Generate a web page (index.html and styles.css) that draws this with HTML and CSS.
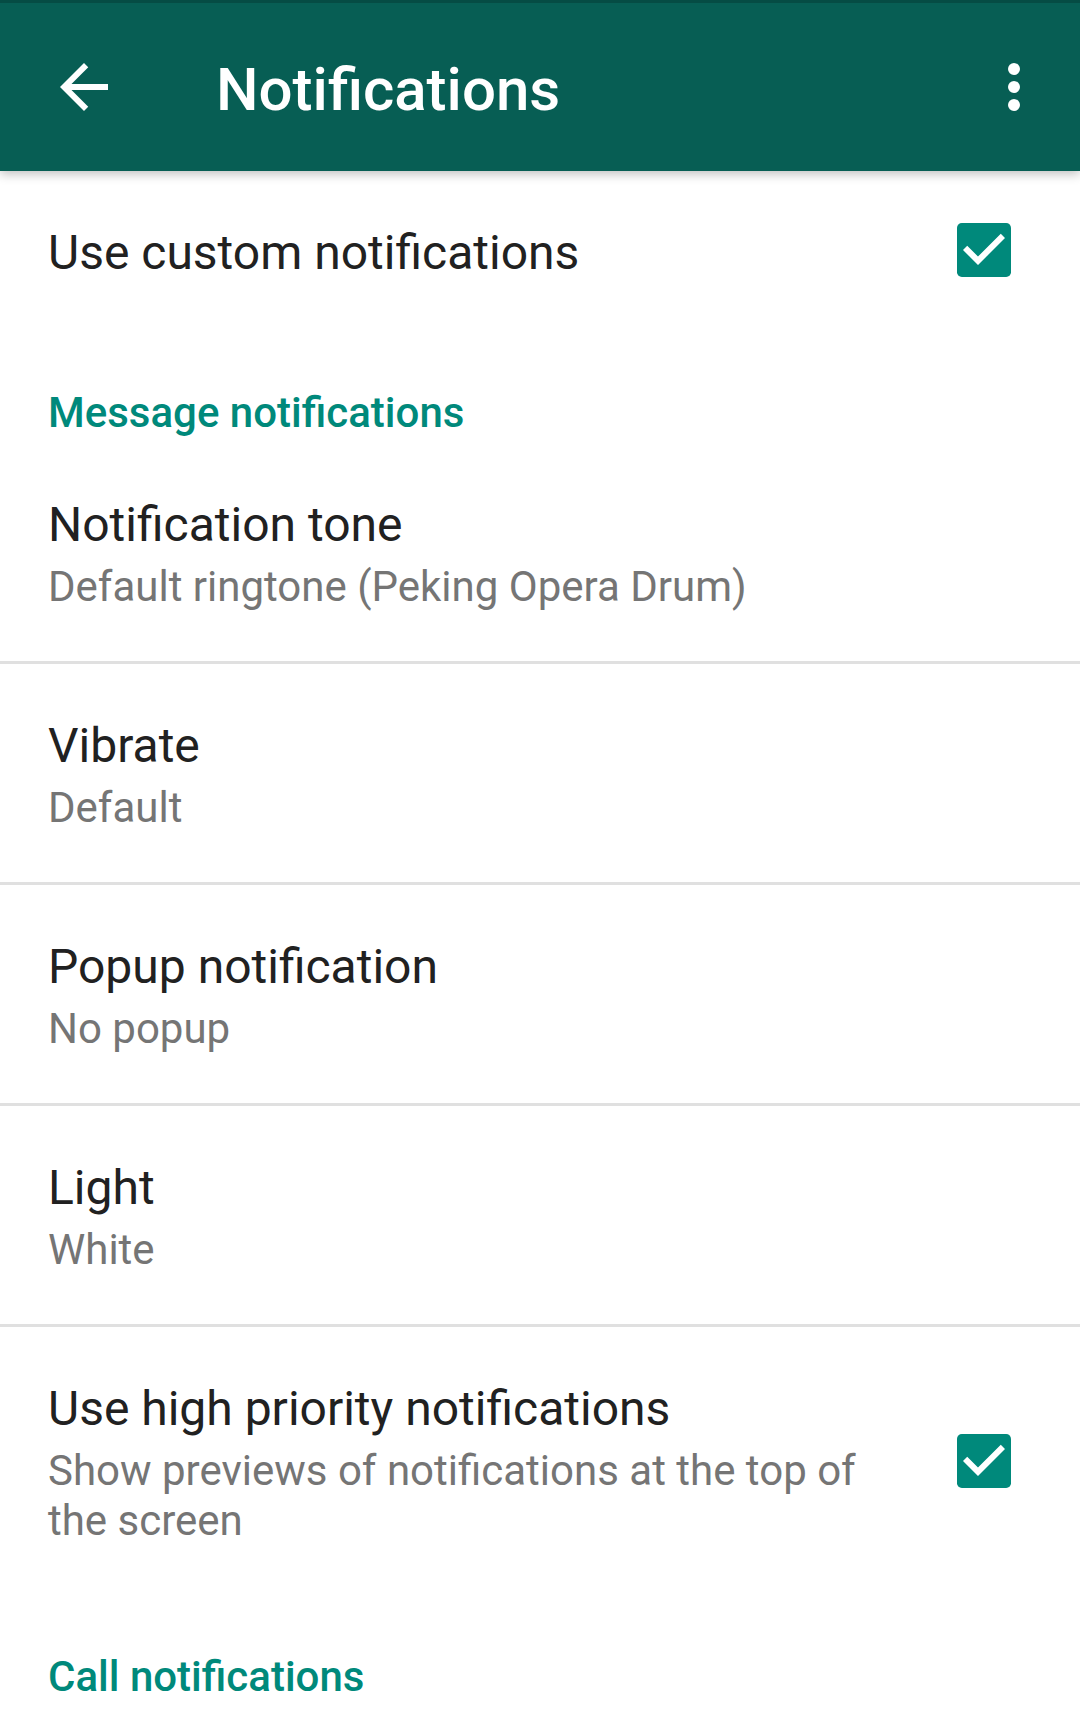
FILE: index.html
```html
<!DOCTYPE html>
<html lang="en">
<head>
    <meta charset="UTF-8">
    <meta name="viewport" content="width=device-width, initial-scale=1.0">
    <title>Notifications</title>
    <link rel="stylesheet" href="styles.css">
</head>
<body>
    <header class="toolbar">
        <svg class="toolbar-icon back" viewBox="0 0 24 24" aria-label="Back">
            <path d="M20 11H7.83l5.59-5.59L12 4l-8 8 8 8 1.41-1.41L7.83 13H20v-2z"/>
        </svg>
        <h1 class="toolbar-title">Notifications</h1>
        <svg class="toolbar-icon more" viewBox="0 0 24 24" aria-label="More options">
            <circle cx="12" cy="6" r="2"/>
            <circle cx="12" cy="12" r="2"/>
            <circle cx="12" cy="18" r="2"/>
        </svg>
    </header>

    <main class="prefs">
        <div class="pref pref-check first">
            <div class="pref-text">
                <div class="pref-title">Use custom notifications</div>
            </div>
            <svg class="checkbox" viewBox="3 3 18 18">
                <rect x="3" y="3" width="18" height="18" rx="1.6"/>
                <path class="tick" d="M10 17l-5-5 1.41-1.41L10 14.17l7.59-7.59L19 8l-9 9z"/>
            </svg>
        </div>

        <div class="category">Message notifications</div>

        <div class="pref divided">
            <div class="pref-title">Notification tone</div>
            <div class="pref-summary">Default ringtone (Peking Opera Drum)</div>
        </div>
        <div class="pref divided">
            <div class="pref-title">Vibrate</div>
            <div class="pref-summary">Default</div>
        </div>
        <div class="pref divided">
            <div class="pref-title">Popup notification</div>
            <div class="pref-summary">No popup</div>
        </div>
        <div class="pref divided">
            <div class="pref-title">Light</div>
            <div class="pref-summary">White</div>
        </div>

        <div class="pref pref-check">
            <div class="pref-text">
                <div class="pref-title">Use high priority notifications</div>
                <div class="pref-summary">Show previews of notifications at the top of the screen</div>
            </div>
            <svg class="checkbox" viewBox="3 3 18 18">
                <rect x="3" y="3" width="18" height="18" rx="1.6"/>
                <path class="tick" d="M10 17l-5-5 1.41-1.41L10 14.17l7.59-7.59L19 8l-9 9z"/>
            </svg>
        </div>

        <div class="category">Call notifications</div>
    </main>
</body>
</html>
```

FILE: styles.css
```css
/* Colors */
:root {
    --primary-color: #075e54;
    --primary-dark: #054c44;
    --accent-color: #00897b;
    --text-color: #212121;
    --summary-color: #757575;
    --divider-color: #e0e0e0;
}

body {
    font-family: Roboto, "Liberation Sans", sans-serif;
    margin: 0;
    padding: 0;
    background: #fff;
    color: var(--text-color);
    overflow: hidden;
}

/* Toolbar */
.toolbar {
    position: relative;
    z-index: 1;
    display: flex;
    align-items: center;
    height: 168px;
    background: var(--primary-color);
    border-top: 3px solid var(--primary-dark);
    box-shadow: 0 3px 10px rgba(0, 0, 0, 0.25);
}

.toolbar-icon {
    width: 72px;
    height: 72px;
    fill: #fff;
    flex-shrink: 0;
}

.toolbar-icon.back {
    margin-left: 48px;
}

.toolbar-icon.more {
    margin-right: 30px;
}

.toolbar-title {
    flex: 1;
    margin: 0 0 0 96px;
    padding-top: 5px;
    font-size: 60px;
    font-weight: 500;
    line-height: 72px;
    color: #fff;
}

/* Preference list */
.pref {
    padding: 54px 48px 49px;
}

.pref.first {
    padding-top: 52px;
}

.pref.divided {
    border-bottom: 3px solid var(--divider-color);
}

.pref-check {
    display: flex;
    align-items: center;
    padding-right: 69px;
}

.pref-text {
    flex: 1;
    margin-right: 67px;
}

.pref-title {
    font-size: 48px;
    line-height: 56px;
}

.pref-summary {
    margin-top: 9px;
    font-size: 42px;
    line-height: 50px;
    color: var(--summary-color);
}

.checkbox {
    width: 54px;
    height: 54px;
    margin-bottom: 5px;
    flex-shrink: 0;
}

.checkbox rect {
    fill: var(--accent-color);
}

.checkbox .tick {
    fill: #fff;
}

.category {
    padding: 57px 48px 5px;
    font-size: 42px;
    font-weight: 500;
    line-height: 50px;
    color: var(--accent-color);
}
```
